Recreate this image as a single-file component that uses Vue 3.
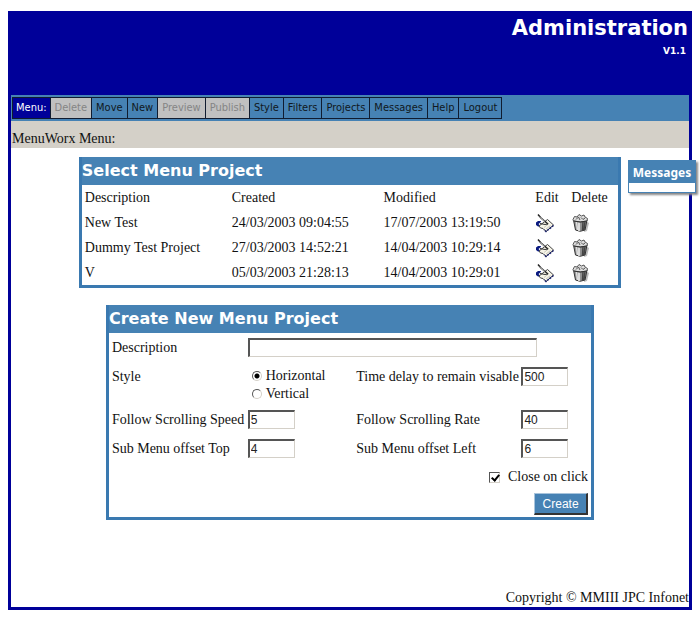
<script setup>
import { ref } from 'vue'

const menu = [
  { label: 'Delete', disabled: true },
  { label: 'Move' },
  { label: 'New' },
  { label: 'Preview', disabled: true },
  { label: 'Publish', disabled: true },
  { label: 'Style' },
  { label: 'Filters' },
  { label: 'Projects' },
  { label: 'Messages' },
  { label: 'Help' },
  { label: 'Logout' },
]

const projects = [
  { name: 'New Test', created: '24/03/2003 09:04:55', modified: '17/07/2003 13:19:50' },
  { name: 'Dummy Test Project', created: '27/03/2003 14:52:21', modified: '14/04/2003 10:29:14' },
  { name: 'V', created: '05/03/2003 21:28:13', modified: '14/04/2003 10:29:01' },
]

const description = ref('')
const orientation = ref('horizontal')
const delay = ref('500')
const speed = ref('5')
const rate = ref('40')
const offsetTop = ref('4')
const offsetLeft = ref('6')
const closeOnClick = ref(true)
</script>

<template>
  <div class="frame">
    <header class="banner">
      <h1>Administration</h1>
      <p>V1.1</p>
    </header>

    <nav class="toolbar">
      <span class="item title">Menu:</span>
      <button v-for="m in menu" :key="m.label" type="button" class="item" :disabled="m.disabled">{{ m.label }}</button>
    </nav>
    <div class="crumb">MenuWorx Menu:</div>

    <main>
      <section class="panel select-panel">
        <h2>Select Menu Project</h2>
        <table>
          <colgroup>
            <col class="c-name" /><col class="c-date" /><col class="c-date" /><col class="c-edit" /><col />
          </colgroup>
          <thead>
            <tr><th>Description</th><th>Created</th><th>Modified</th><th>Edit</th><th>Delete</th></tr>
          </thead>
          <tbody>
            <tr v-for="p in projects" :key="p.name">
              <td>{{ p.name }}</td>
              <td>{{ p.created }}</td>
              <td>{{ p.modified }}</td>
              <td>
                <button type="button" class="icon" aria-label="Edit">
                  <svg width="20" height="20" viewBox="0 0 20 20">
                    <path d="M6 8H3L1 9.500V12L3 13.500H5Z" fill="#0a1a80" />
                    <path d="M3.500 11L6 9L8 13L5 12.500Z" fill="#fff" />
                    <path d="M4 13L12.500 6.500L18.500 12L11 18.500L8 15.500L5.500 15Z" fill="#f7f5e8" stroke="#444" />
                    <path d="M18.500 12.500L11 18.500L9 16.500" fill="none" stroke="#18206c" stroke-width="1.500" stroke-dasharray="2 1" />
                    <path d="M9 14.500L14 10.500M11 16L15.500 12.500" stroke="#cbc9bc" />
                    <path d="M3 1.500L6 5L13 11" fill="none" stroke="#222" stroke-width="1.500" />
                    <path d="M4.500 4L10 8.500" stroke="#aaa" />
                    <path d="M5 10.500L10 11.500L13 11" fill="none" stroke="#333" />
                  </svg>
                </button>
              </td>
              <td>
                <button type="button" class="icon" aria-label="Delete">
                  <svg width="20" height="20" viewBox="0 0 20 20">
                    <path d="M15 8L18 10L16 18L13 19Z" fill="#bbb" />
                    <path d="M2.500 7L4.500 17Q9 19.500 14 17L16 7Z" fill="#999" stroke="#333" />
                    <path d="M5.500 9L6.500 17" stroke="#ddd" stroke-width="1.500" />
                    <path d="M8 9V18" stroke="#f2f2f2" stroke-width="1.500" />
                    <path d="M10 9V18" stroke="#888" />
                    <path d="M12 9L11.500 18M14 8.500L13 17" stroke="#444" stroke-width="1.500" />
                    <path d="M2 6.500L3.500 3.500L6 4L8 1.500L10.500 3L13 2L14 4L16.500 5.500L16 8Q9 10 2.500 8Z" fill="#ddd" stroke="#555" />
                    <path d="M5 6.500L7.500 4L9 7M10 4.500L12 6.500L14 5" fill="none" stroke="#555" />
                    <path d="M3 8Q9 10 16 8" fill="none" stroke="#333" />
                  </svg>
                </button>
              </td>
            </tr>
          </tbody>
        </table>
      </section>

      <section class="panel create-panel">
        <h2>Create New Menu Project</h2>
        <form @submit.prevent>
          <label for="desc">Description</label>
          <div class="wide"><input id="desc" v-model="description" type="text" class="text long" /></div>

          <span id="style-label">Style</span>
          <div class="radios" role="radiogroup" aria-labelledby="style-label">
            <label><input v-model="orientation" type="radio" name="style" value="horizontal" />Horizontal</label>
            <label><input v-model="orientation" type="radio" name="style" value="vertical" />Vertical</label>
          </div>
          <label for="delay">Time delay to remain visable</label>
          <div><input id="delay" v-model="delay" type="text" class="text" /></div>

          <label for="speed">Follow Scrolling Speed</label>
          <div><input id="speed" v-model="speed" type="text" class="text" /></div>
          <label for="rate">Follow Scrolling Rate</label>
          <div><input id="rate" v-model="rate" type="text" class="text" /></div>

          <label for="top">Sub Menu offset Top</label>
          <div><input id="top" v-model="offsetTop" type="text" class="text" /></div>
          <label for="left">Sub Menu offset Left</label>
          <div><input id="left" v-model="offsetLeft" type="text" class="text" /></div>

          <div class="row-end">
            <label class="check"><input v-model="closeOnClick" type="checkbox" />Close on click</label>
          </div>
          <div class="row-end"><button type="submit" class="create">Create</button></div>
        </form>
      </section>
    </main>

    <footer>Copyright © MMIII JPC Infonet</footer>
  </div>

  <aside class="messages">
    <h3>Messages</h3>
    <div class="messages-body"></div>
  </aside>
</template>

<style>
body {
  margin: 0;
  background: #fff;
}
</style>

<style scoped>
* {
  box-sizing: border-box;
}

h1, h2, h3, p {
  margin: 0;
}

.frame {
  display: flex;
  flex-direction: column;
  min-height: calc(100vh - 22px);
  margin: 11px 8px;
  border: 3px solid #000099;
  border-top: 0;
  font: 14px/18px "Liberation Serif", "Times New Roman", serif;
  color: #111;
}

.banner {
  height: 84px;
  padding: 4px 1px;
  background: #000099;
  color: #fff;
  text-align: right;
  font-family: "DejaVu Sans", Verdana, sans-serif;
  font-weight: bold;
}

.banner h1 {
  font-size: 21px;
  line-height: 26px;
}

.banner p {
  padding: 4px 2px;
  font-size: 9px;
  line-height: 12px;
}

.toolbar {
  display: flex;
  padding: 2px 1px;
  background: #4682b4;
}

.item {
  height: 22px;
  margin: 0 0 0 -1px;
  padding: 0 4px;
  border: 1px solid #101c30;
  background: #4682b4;
  color: #101820;
  font: 11px/20px "DejaVu Sans Condensed", Tahoma, "DejaVu Sans", sans-serif;
}

.item.title {
  margin-left: 0;
  padding: 0 3px;
  background: #000099;
  color: #fff;
}

.item:disabled {
  background: #c0c0c0;
  color: #858585;
}

.crumb {
  padding: 9px 1px 0;
  background: #d4d0c8;
}

main {
  display: flex;
  flex-direction: column;
  align-items: center;
  gap: 17px;
  padding-top: 9px;
}

.panel {
  border: 3px solid #3a79b0;
  border-top: 0;
  background: #fff;
}

.panel h2 {
  height: 28px;
  background: #4682b4;
  color: #fff;
  font: bold 16px/27px "DejaVu Sans", Verdana, sans-serif;
}

.select-panel {
  width: 80%;
}

.create-panel {
  width: 72%;
}

table {
  width: 100%;
  table-layout: fixed;
  border-collapse: collapse;
}

.c-name {
  width: 27.4%;
}

.c-date {
  width: 28.3%;
}

.c-edit {
  width: 6.7%;
}

th, td {
  height: 25px;
  padding: 0 3px;
  text-align: left;
  font-weight: normal;
}

.icon {
  display: block;
  padding: 0;
  border: 0;
  background: none;
}

.icon svg {
  display: block;
}

form {
  display: grid;
  grid-template-columns: 28.5% 22.8% 34.7% 1fr;
  grid-template-rows: 29px 43px 29px 29px 27px 27px;
  padding: 0 3px;
  white-space: nowrap;
}

form > * {
  padding-top: 6px;
}

form > div {
  padding-top: 5px;
}

.wide {
  grid-column: 2 / 5;
}

.text {
  display: block;
  width: 47px;
  height: 19px;
  padding: 0 1px;
  border: 1px solid #d4d0c8;
  border-top: 2px solid #555;
  border-left: 2px solid #555;
  border-radius: 0;
  background: #fff;
  color: #222;
  font: 12px/16px "Liberation Sans", Arial, sans-serif;
}

.long {
  width: 85%;
}

.radios {
  display: flex;
  flex-direction: column;
}

.radios label,
.check {
  display: flex;
  align-items: center;
}

.radios label {
  gap: 4px;
  padding-left: 4px;
}

.check {
  gap: 8px;
}

input[type="radio"],
input[type="checkbox"] {
  appearance: none;
  width: 10px;
  height: 10px;
  margin: 0;
  border: 1px solid #d4d0c8;
  border-top-color: #555;
  border-left-color: #555;
  background: #fff;
}

input[type="radio"] {
  border-radius: 50%;
}

input[type="radio"]:checked {
  background: radial-gradient(circle, #000 0 2px, #fff 3px);
}

input[type="checkbox"] {
  position: relative;
  width: 11px;
  height: 11px;
}

input[type="checkbox"]:checked::after {
  content: "";
  position: absolute;
  left: 3px;
  top: 0;
  width: 3px;
  height: 6px;
  border: solid #000;
  border-width: 0 2px 2px 0;
  transform: rotate(40deg);
}

.row-end {
  grid-column: 1 / 5;
  display: flex;
  justify-content: flex-end;
  align-items: flex-start;
}

form > .row-end:last-child {
  padding-top: 3px;
}

.create {
  width: 54px;
  height: 22px;
  padding: 0;
  border: 1px solid #a8c4dc;
  border-right: 2px solid #333;
  border-bottom: 2px solid #333;
  background: #4682b4;
  color: #fff;
  font: 12px/16px "Liberation Sans", Arial, sans-serif;
}

footer {
  margin-top: auto;
  text-align: right;
}

.messages {
  position: absolute;
  top: 160px;
  right: 4px;
  width: 68px;
  border: 1px solid #4682b4;
  background: #fff;
  box-shadow: 2px 2px 2px #888;
}

.messages h3 {
  height: 22px;
  background: #4682b4;
  color: #fff;
  text-align: center;
  font: bold 12px/23px "Noto Sans", Tahoma, sans-serif;
}

.messages-body {
  height: 9px;
}
</style>
